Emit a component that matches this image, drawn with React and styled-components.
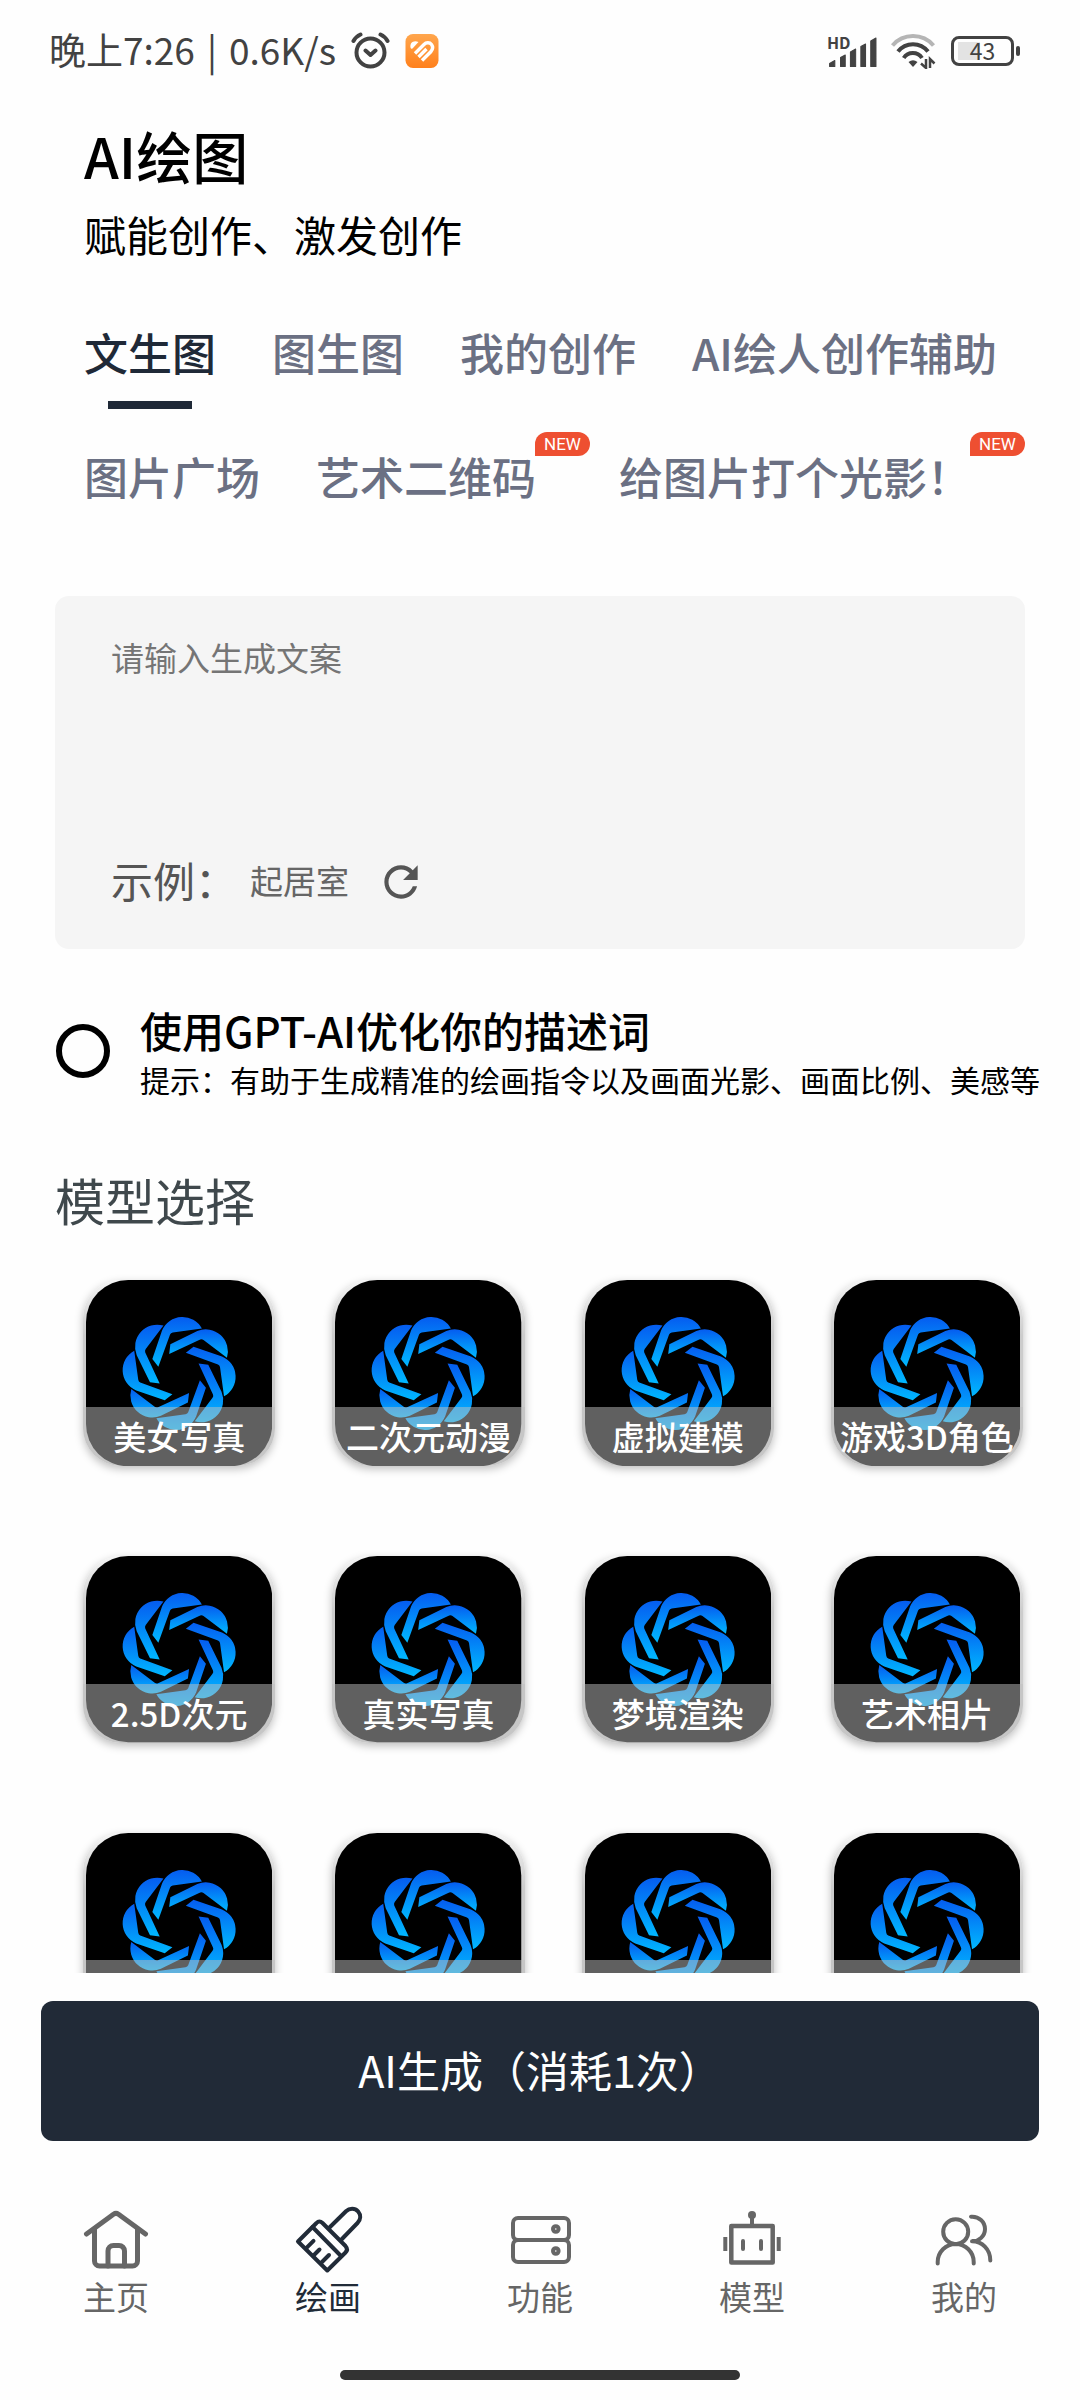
import { useState } from 'react';
import styled, { createGlobalStyle } from 'styled-components';

const GlobalStyle = createGlobalStyle`
  * {
    box-sizing: border-box;
  }

  body {
    margin: 0;
    background-color: #fefefe;
    font-family: 'Noto Sans CJK SC', 'Noto Sans', sans-serif;
    color: #000;
  }

  button, input, textarea {
    font-family: inherit;
  }

  h1, h2, p {
    margin: 0;
    font-weight: 400;
  }
`;

const Page = styled.div`
  height: 100vh;
  display: flex;
  flex-direction: column;
  overflow: hidden;
`;

const StatusBar = styled.div`
  height: 102px;
  flex-shrink: 0;
  padding: 0 60px 0 49px;
  display: flex;
  align-items: center;
  justify-content: space-between;
  color: #424242;
`;

const StatusSide = styled.div`
  display: flex;
  align-items: center;
  gap: ${(props) => props.$gap}px;
`;

const StatusText = styled.span`
  display: flex;
  gap: 12px;
  padding-bottom: 4px;
  font-size: 37px;
  line-height: 48px;
  white-space: nowrap;
`;

const SignalBox = styled.div`
  position: relative;
  width: 50px;
  height: 34px;

  svg {
    display: block;
  }
`;

const HdText = styled.span`
  position: absolute;
  left: 0;
  top: 0;
  font-size: 16px;
  line-height: 16px;
  font-weight: 700;
`;

const Battery = styled.div`
  display: flex;
  align-items: center;
  gap: 2px;
`;

const BatteryBody = styled.div`
  width: 63px;
  height: 30px;
  padding: 0 3px 2px;
  border: 3px solid #424242;
  border-radius: 8px;
  background: linear-gradient(#e3e3e3, #e3e3e3) 4px center / 22px 18px no-repeat;
  display: flex;
  align-items: center;
  justify-content: center;
  font-size: 23px;
  line-height: 22px;
`;

const BatteryCap = styled.div`
  width: 4px;
  height: 10px;
  border-radius: 2px;
  background-color: #424242;
`;

const Header = styled.header`
  padding: 20px 55px 0 84px;
`;

const Title = styled.h1`
  font-size: 56px;
  line-height: 66px;
  font-weight: 500;
`;

const Subtitle = styled.p`
  margin-top: 21px;
  font-size: 42px;
  line-height: 50px;
`;

const Tabs = styled.nav`
  margin-top: 61px;
  padding: 0 55px 0 84px;
  display: flex;
  flex-wrap: wrap;
  gap: 35px 56px;
`;

const Tab = styled.button`
  position: relative;
  padding: 0 ${(props) => (props.$isNew ? '27px' : '0')} 0 0;
  border: none;
  background: none;
  display: flex;
  flex-direction: column;
  align-items: center;
  gap: 17px;
  font-size: 44px;
  line-height: 64px;
  font-weight: 500;
  color: ${(props) => (props.$active ? '#1f2937' : '#6b7083')};
  cursor: pointer;

  &::after {
    content: '';
    width: 84px;
    height: 8px;
    background-color: ${(props) => (props.$active ? '#1f2937' : 'transparent')};
  }
`;

const NewBadge = styled.span`
  position: absolute;
  top: -12px;
  right: -27px;
  width: 55px;
  height: 24px;
  border-radius: 12px 12px 12px 0;
  background-color: #ee4f31;
  color: white;
  font-family: Roboto, sans-serif;
  font-size: 17px;
  line-height: 25px;
  font-weight: 400;
  text-align: center;
`;

const PromptBox = styled.section`
  margin: 63px 55px 0;
  padding: 39px 56px 42px;
  border-radius: 14px;
  background-color: #f5f5f5;
`;

const PromptInput = styled.textarea`
  display: block;
  width: 100%;
  height: 222px;
  padding: 0;
  border: none;
  outline: none;
  resize: none;
  background: none;
  font-size: 33px;
  line-height: 44px;

  &::placeholder {
    color: #757575;
    opacity: 1;
  }
`;

const ExampleRow = styled.div`
  display: flex;
  align-items: flex-start;
  height: 50px;
  line-height: 46px;
  color: #555;
`;

const ExampleLabel = styled.span`
  font-size: 42px;
  margin-right: 13px;
`;

const ExampleText = styled.span`
  font-size: 33px;
  color: #666;
  margin-right: 27px;
`;

const RefreshButton = styled.button`
  width: 50px;
  height: 50px;
  padding: 0;
  border: none;
  background: none;
  color: #555;
  cursor: pointer;

  svg {
    display: block;
  }
`;

const OptimizeRow = styled.label`
  margin: 53px 0 0 56px;
  display: flex;
  align-items: center;
  gap: 30px;
  white-space: nowrap;
`;

const RoundCheck = styled.input`
  appearance: none;
  flex-shrink: 0;
  width: 54px;
  height: 54px;
  margin: 0;
  border: 6px solid #000;
  border-radius: 50%;

  &:checked {
    background: radial-gradient(#000 50%, transparent 52%);
  }
`;

const OptimizeTitle = styled.p`
  font-size: 42px;
  line-height: 56px;
  font-weight: 500;
`;

const OptimizeHint = styled.p`
  font-size: 30px;
  line-height: 42px;
`;

const SectionTitle = styled.h2`
  margin: 69px 55px 0;
  font-size: 50px;
  line-height: 60px;
  color: #3f484c;
`;

const ModelScroll = styled.div`
  flex: 1;
  min-height: 0;
  margin-top: 27px;
  padding: 24px 57px 24px 83px;
  overflow-y: auto;
  scrollbar-width: none;
`;

const ModelGrid = styled.div`
  display: grid;
  grid-template-columns: repeat(4, 1fr);
  gap: 90px 57px;
`;

const ModelCard = styled.button`
  position: relative;
  padding: 0 3px;
  border: none;
  border-radius: 38px;
  overflow: hidden;
  background: linear-gradient(#f4f4f4, #cccccc 30%);
  box-shadow: 0 3px 8px rgba(0, 0, 0, 0.25);
  cursor: pointer;

  svg {
    display: block;
    width: 100%;
    height: auto;
  }
`;

const ModelName = styled.span`
  position: absolute;
  left: 0;
  right: 0;
  bottom: 0;
  height: 59px;
  background-color: rgba(192, 192, 192, 0.5);
  color: white;
  font-size: 33px;
  line-height: 58px;
  font-weight: 500;
  white-space: nowrap;
`;

const GenerateButton = styled.button`
  flex-shrink: 0;
  height: 140px;
  margin: 28px 41px 0;
  padding-bottom: 6px;
  border: none;
  border-radius: 12px;
  background-color: #212a37;
  color: white;
  font-size: 43px;
  cursor: pointer;
`;

const BottomNav = styled.nav`
  margin-top: 66px;
  padding: 0 10px;
  display: grid;
  grid-template-columns: repeat(5, 1fr);
`;

const NavItem = styled.a`
  display: flex;
  flex-direction: column;
  align-items: center;
  gap: 3px;
  font-size: 33px;
  line-height: 40px;
  text-decoration: none;
  color: ${(props) => (props.$active ? '#212b38' : '#666')};

  svg {
    overflow: visible;
  }
`;

const HomeIndicator = styled.div`
  flex-shrink: 0;
  width: 37%;
  height: 10px;
  margin: 54px auto 20px;
  border-radius: 5px;
  background-color: #333;
`;

// one petal around (0, 0); the others are the same petal turned by 45deg
const petalPath = (deg) => {
  const a = (deg * Math.PI) / 180;
  const p = (x, y) =>
    `${(x * Math.cos(a) - y * Math.sin(a)).toFixed(1)} ${(x * Math.sin(a) + y * Math.cos(a)).toFixed(1)}`;
  return `M${p(-80, -43)} L${p(-62, -20)} L${p(-27, -116)} Q${p(-25, -121)} ${p(-19, -122)} L${p(68, -134)} A66 66 0 0 0 ${p(-51, -128)} Z`;
};

const PETALS = [0, 45, 90, 135, 180, 225, 270, 315].map(petalPath);

const ModelLogo = () => (
  <svg viewBox="-278 -279 556 556" aria-hidden="true">
    <defs>
      <linearGradient id="petal" x1="0" y1="0" x2="0" y2="1">
        <stop offset="0" stopColor="#055cf0" />
        <stop offset="1" stopColor="#00b8ff" />
      </linearGradient>
    </defs>
    <rect x="-278" y="-279" width="556" height="556" rx="126" fill="#000" />
    {PETALS.map((d) => (
      <path key={d} d={d} fill="url(#petal)" />
    ))}
  </svg>
);

const AlarmIcon = () => (
  <svg width="39" height="38" viewBox="0 0 39 38" fill="none" stroke="#424242" strokeWidth="4" strokeLinecap="round">
    <circle cx="19.5" cy="20.5" r="14" />
    <path d="M2.5 9Q5 4.500 9.500 2.500M36.500 9Q34 4.500 29.500 2.500M14.500 18.500l5 4.500 5-4.500" strokeLinejoin="round" />
  </svg>
);

const HealthIcon = () => (
  <svg width="34" height="34" viewBox="0 0 33 34">
    <defs>
      <linearGradient id="health" x1="0" y1="0" x2="0" y2="1">
        <stop offset="0" stopColor="#ffa64d" />
        <stop offset="1" stopColor="#ff801c" />
      </linearGradient>
    </defs>
    <rect width="33" height="34" rx="7.500" fill="url(#health)" />
    <path d="M5 13.500C4 9 8 5.500 13 8L7 14.500Q5.500 15.500 5 13.500Z" fill="#fff" />
    <path d="M9.500 19.500L18.500 10.500C20.500 8.500 24 8 26 10.500C27.500 12.500 27.500 15 25.500 17.500L16.500 26.500M13 23L21 15" fill="none" stroke="#fff" strokeWidth="3.400" />
  </svg>
);

const SignalIcon = () => (
  <svg width="50" height="34" viewBox="0 0 48 34" preserveAspectRatio="none" fill="#424242" stroke="#424242" strokeLinejoin="round">
    <path d="M2.500 29.500l5-3v6h-5zM13 23.500l4.500-2.500v11.500H13zM22.500 18l5-3v17.500h-5zM32.500 12.500l4.500-2.500v22.500h-4.500zM42 7l5-3v28.500h-5z" />
  </svg>
);

const WifiIcon = () => (
  <svg width="48" height="36" viewBox="0 0 48 36" fill="none" strokeWidth="4">
    <path d="M2.500 12.500A27 27 0 0 1 43.500 12.500" stroke="#b5b5b5" />
    <path d="M8 18.500A19 19 0 0 1 38 18.500M13.700 25A11 11 0 0 1 32 25" stroke="#424242" />
    <path d="M18.500 29Q23 25.500 27.500 29L23 34Z" fill="#424242" />
    <path d="M36 26v9l-5-4.500M40 35v-9l4.500 4.500" stroke="#424242" strokeWidth="2.500" />
  </svg>
);

const RefreshIcon = () => (
  <svg width="50" height="50" viewBox="0 0 24 24" fill="currentColor">
    <path d="M17.650 6.350C16.200 4.900 14.210 4 12 4c-4.420 0-7.990 3.580-7.990 8s3.570 8 7.990 8c3.730 0 6.840-2.550 7.730-6h-2.080c-.82 2.330-3.040 4-5.650 4-3.310 0-6-2.690-6-6s2.690-6 6-6c1.660 0 3.140.69 4.220 1.780L13 11h7V4l-2.350 2.350z" />
  </svg>
);

const NavIcon = ({ children, width = 4 }) => (
  <svg
    width="66"
    height="66"
    viewBox="0 0 66 66"
    fill="none"
    stroke="currentColor"
    strokeWidth={width}
    strokeLinecap="round"
    strokeLinejoin="round"
    aria-hidden="true"
  >
    {children}
  </svg>
);

const HomeIcon = () => (
  <NavIcon width={5}>
    <path d="M3.500 27L30.500 7.200Q33 5.500 35.500 7.200L62.500 27" />
    <path d="M11.500 22V54a5 5 0 0 0 5 5h33a5 5 0 0 0 5-5V22" />
    <path d="M25 59V44a5.500 5.500 0 0 1 5.500-5.500h5.500a5.500 5.500 0 0 1 5.500 5.500V59" />
  </NavIcon>
);

const BrushIcon = () => (
  <NavIcon>
    <path d="M34.500 20.500L51 4.300C54.500 1 60 1 63 4.300C66 8 66 12.500 62.500 16L46.500 32.500" />
    <path d="M3 34.500L21.500 16Q24.300 13 27.500 16L50.500 39Q53.500 42.500 50.500 45.500L32.300 63.500Z" />
    <path d="M17.500 20L45.500 48.500M11 41.300l7.500-7.500M18.500 48.500l6-6M26.500 55.500l7.500-7.500" />
  </NavIcon>
);

const ServerIcon = () => (
  <NavIcon>
    <rect x="6" y="11" width="56" height="22" rx="5" />
    <rect x="6" y="33" width="56" height="22" rx="5" />
    <circle cx="48.800" cy="22" r="2.800" strokeWidth="4" />
    <circle cx="48.800" cy="44" r="2.800" strokeWidth="4" />
  </NavIcon>
);

const RobotIcon = () => (
  <NavIcon>
    <rect x="12.300" y="19" width="41.400" height="36.500" strokeWidth="4.500" />
    <circle cx="33" cy="8" r="4" fill="currentColor" stroke="none" />
    <path d="M33 8v10M24 34v8M42 34v8" />
    <path d="M6.300 30v14M59.700 30v14" strokeLinecap="butt" />
  </NavIcon>
);

const UsersIcon = () => (
  <NavIcon>
    <circle cx="24.700" cy="24.700" r="12.500" />
    <path d="M6.700 56.500V55a18 18 0 0 1 36 0v1.500" />
    <path d="M40 9.700C48 9 54 15 54 22S48 34.500 41 34.300C51 34.300 59.300 42 59.300 53.500" />
  </NavIcon>
);

const TABS = [
  { name: '文生图' },
  { name: '图生图' },
  { name: '我的创作' },
  { name: 'AI绘人创作辅助' },
  { name: '图片广场' },
  { name: '艺术二维码', isNew: true },
  { name: '给图片打个光影！', isNew: true },
];

const MODELS = [
  '美女写真',
  '二次元动漫',
  '虚拟建模',
  '游戏3D角色',
  '2.5D次元',
  '真实写真',
  '梦境渲染',
  '艺术相片',
  '',
  '',
  '',
  '',
];

const NAV_ITEMS = [
  { name: '主页', href: '#home', Icon: HomeIcon },
  { name: '绘画', href: '#draw', Icon: BrushIcon },
  { name: '功能', href: '#tools', Icon: ServerIcon },
  { name: '模型', href: '#models', Icon: RobotIcon },
  { name: '我的', href: '#mine', Icon: UsersIcon },
];

const App = () => {
  const [tab, setTab] = useState('文生图');
  const [prompt, setPrompt] = useState('');
  const [optimize, setOptimize] = useState(false);

  return (
    <>
      <GlobalStyle />
      <Page>
        <StatusBar>
          <StatusSide $gap={15}>
            <StatusText>
              <span>晚上7:26</span>
              <span>|</span>
              <span>0.6K/s</span>
            </StatusText>
            <AlarmIcon />
            <HealthIcon />
          </StatusSide>
          <StatusSide $gap={13}>
            <SignalBox>
              <SignalIcon />
              <HdText>HD</HdText>
            </SignalBox>
            <WifiIcon />
            <Battery>
              <BatteryBody>43</BatteryBody>
              <BatteryCap />
            </Battery>
          </StatusSide>
        </StatusBar>

        <Header>
          <Title>AI绘图</Title>
          <Subtitle>赋能创作、激发创作</Subtitle>
        </Header>

        <Tabs>
          {TABS.map(({ name, isNew }) => (
            <Tab key={name} type="button" $active={tab === name} $isNew={isNew} onClick={() => setTab(name)}>
              {name}
              {isNew && <NewBadge>NEW</NewBadge>}
            </Tab>
          ))}
        </Tabs>

        <PromptBox>
          <PromptInput
            aria-label="请输入生成文案"
            placeholder="请输入生成文案"
            value={prompt}
            onChange={(e) => setPrompt(e.target.value)}
          />
          <ExampleRow>
            <ExampleLabel>示例：</ExampleLabel>
            <ExampleText>起居室</ExampleText>
            <RefreshButton type="button" aria-label="刷新">
              <RefreshIcon />
            </RefreshButton>
          </ExampleRow>
        </PromptBox>

        <OptimizeRow>
          <RoundCheck type="checkbox" checked={optimize} onChange={(e) => setOptimize(e.target.checked)} />
          <div>
            <OptimizeTitle>使用GPT-AI优化你的描述词</OptimizeTitle>
            <OptimizeHint>提示：有助于生成精准的绘画指令以及画面光影、画面比例、美感等</OptimizeHint>
          </div>
        </OptimizeRow>

        <SectionTitle>模型选择</SectionTitle>
        <ModelScroll>
          <ModelGrid>
            {MODELS.map((name, i) => (
              <ModelCard key={i} type="button">
                <ModelLogo />
                <ModelName>{name}</ModelName>
              </ModelCard>
            ))}
          </ModelGrid>
        </ModelScroll>

        <GenerateButton type="button">AI生成（消耗1次）</GenerateButton>

        <BottomNav>
          {NAV_ITEMS.map(({ name, href, Icon }) => (
            <NavItem key={name} href={href} $active={name === '绘画'}>
              <Icon />
              {name}
            </NavItem>
          ))}
        </BottomNav>
        <HomeIndicator />
      </Page>
    </>
  );
};

export default App;
